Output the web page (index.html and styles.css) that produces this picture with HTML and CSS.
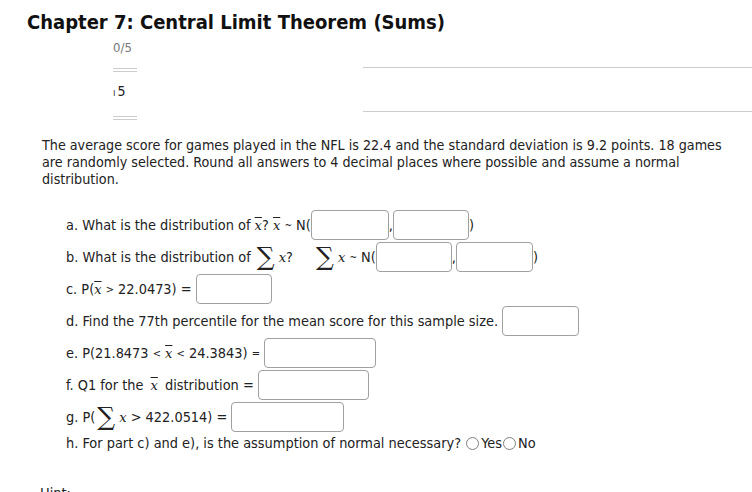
FILE: index.html
```html
<!DOCTYPE html>
<html>
<head>
<meta charset="utf-8">
<link rel="stylesheet" href="styles.css">
</head>
<body>
<h1 class="title">Chapter 7: Central Limit Theorem (Sums)</h1>
<div class="score">
  <div class="score-left">
    <div class="score-val">0/5</div>
    <div class="dbl"></div>
    <div class="score-q"><span class="tick">ı</span>5</div>
    <div class="dbl"></div>
  </div>
  <div class="score-right">
    <div class="long l1"></div>
    <div class="long l2"></div>
  </div>
</div>
<p class="intro">The average score for games played in the NFL is 22.4 and the standard deviation is 9.2 points. 18 games are randomly selected. Round all answers to 4 decimal places where possible and assume a normal distribution.</p>
<div class="questions">
  <div class="row">a. What is the distribution of&nbsp;<span class="xb">x</span>?&nbsp;<span class="xb">x</span>&nbsp;<span class="tl">~</span>&nbsp;N(<span class="inp w78"></span>,<span class="inp w76"></span>)</div>
  <div class="row">b. What is the distribution of&nbsp;<span class="sig">∑</span><span class="xi">x</span>?&nbsp;<span class="sig wide">∑</span><span class="xi">x</span>&nbsp;<span class="tl">~</span>&nbsp;N(<span class="inp w76"></span>,<span class="inp w77"></span>)</div>
  <div class="row">c. P(<span class="xb">x</span>&nbsp;<span class="op">&gt;</span>&nbsp;22.0473) =&nbsp;<span class="inp w76"></span></div>
  <div class="row">d. Find the 77th percentile for the mean score for this sample size.&nbsp;<span class="inp w77"></span></div>
  <div class="row">e. P(21.8473&nbsp;<span class="op">&lt;</span>&nbsp;<span class="xb">x</span>&nbsp;<span class="op">&lt;</span>&nbsp;24.3843)&nbsp;<span class="op">=</span>&nbsp;<span class="inp w112"></span></div>
  <div class="row">f. Q1 for the&nbsp;<span class="xb pad">x</span>&nbsp;distribution =&nbsp;<span class="inp w111"></span></div>
  <div class="row">g. P(<span class="sig">∑</span><span class="xi">x</span>&nbsp;&gt;&nbsp;422.0514) =&nbsp;<span class="inp w113"></span></div>
  <div class="row last">h. For part c) and e), is the assumption of normal necessary?&nbsp;<span class="radio"></span>Yes<span class="radio"></span>No</div>
</div>
<div class="hint">Hint:</div>
</body>
</html>
```
FILE: styles.css
```css
html, body {
  margin: 0;
  padding: 0;
  background: #fff;
  overflow: hidden;
}
body {
  font-family: "DejaVu Sans Condensed", "DejaVu Sans", sans-serif;
  font-size: 14.4px;
  color: #222;
  width: 752px;
  height: 492px;
}
.title {
  margin: 0;
  padding: 9px 0 0 27px;
  font-size: 20px;
  font-weight: bold;
  line-height: 26px;
  color: #111;
}
.score {
  display: flex;
  margin-top: 4px;
  font-size: 13px;
}
.score-left {
  margin-left: 113px;
  width: 24px;
}
.score-val {
  color: #777;
  line-height: 18px;
  margin-bottom: 11px;
}
.dbl {
  height: 2px;
  border-top: 1px solid #ccc;
  border-bottom: 1px solid #ccc;
}
.score-q {
  margin-top: 10px;
  margin-bottom: 14px;
  line-height: 18px;
  color: #222;
  font-size: 14px;
}
.tick {
  font-size: 10px;
  color: #333;
  margin-right: 2px;
}
.score-right {
  margin-left: 226px;
  flex: 1;
}
.long {
  border-top: 1px solid #ccc;
}
.l1 { margin-top: 28px; }
.l2 { margin-top: 43px; }
.intro {
  margin: 17px 20px 0 42px;
  line-height: 17px;
  font-size: 14.2px;
}
.questions {
  margin: 21px 0 0 66px;
}
.row {
  display: flex;
  align-items: center;
  height: 32px;
  white-space: nowrap;
}
.row.last {
  height: 20px;
}
.inp {
  display: inline-block;
  flex: none;
  box-sizing: border-box;
  height: 30px;
  border: 1px solid #a0a0a0;
  border-radius: 4px;
  background: #fff;
}
.w76 { width: 76px; }
.w77 { width: 77px; }
.w78 { width: 78px; }
.w111 { width: 111px; }
.w112 { width: 112px; }
.w113 { width: 113px; }
.xb, .xi {
  font-family: "DejaVu Serif", serif;
  font-style: italic;
  font-size: 13px;
}
.xb {
  text-decoration: overline;
}
.xb.pad {
  margin: 0 3px;
}
.sig {
  font-family: "DejaVu Serif", serif;
  font-size: 25px;
  line-height: 16px;
  margin: 0 4px 0 2px;
}
.sig.wide {
  margin-left: 19px;
}
.op {
  font-size: 11px;
}
.tl {
  font-size: 10px;
}
.radio {
  display: inline-block;
  box-sizing: border-box;
  width: 13px;
  height: 13px;
  border: 1px solid #808080;
  border-radius: 50%;
  margin: 0 2px 0 1px;
}
.hint {
  margin: 32px 0 0 40px;
}
```
